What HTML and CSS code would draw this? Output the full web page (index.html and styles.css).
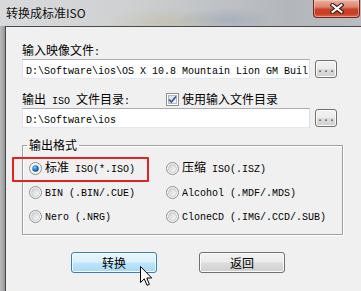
FILE: index.html
```html
<!DOCTYPE html>
<html>
<head>
<meta charset="utf-8">
<link rel="stylesheet" href="styles.css">
</head>
<body>
<div class="window">
  <div class="titlebar">
    <div class="title">转换成标准ISO</div>
    <div class="close">
      <svg width="14" height="11" viewBox="0 0 14 11"><path d="M2.5 2 L11.5 9 M11.5 2 L2.5 9" stroke="#3b1d17" stroke-width="4.2" stroke-linecap="square" fill="none"/><path d="M2.5 2 L11.5 9 M11.5 2 L2.5 9" stroke="#ffffff" stroke-width="2" stroke-linecap="square" fill="none"/></svg>
    </div>
  </div>
  <div class="body">
    <div class="frame-left"></div>
    <div class="content">
      <div class="label">输入映像文件<span class="m">:</span></div>
      <div class="field-row">
        <div class="input"><span class="m">D:\Software\ios\OS X 10.8 Mountain Lion GM Buil</span></div>
        <div class="btn small"><span class="m">...</span></div>
      </div>
      <div class="label-row">
        <div class="label w">输出<span class="m"> ISO </span>文件目录<span class="m">:</span></div>
        <div class="check">
          <svg class="box" width="13" height="13" viewBox="0 0 13 13"><defs><linearGradient id="cb" x1="0" y1="0" x2="1" y2="1"><stop offset="0" stop-color="#d9dcdf"/><stop offset="1" stop-color="#f9f9f9"/></linearGradient></defs><rect x="0.5" y="0.5" width="12" height="12" fill="#fff" stroke="#8f8f8f"/><rect x="2.5" y="2.5" width="8" height="8" fill="url(#cb)" stroke="#b4b7bb"/><path d="M3 6.5 L5.3 9 L10 3.5" stroke="#3451a0" stroke-width="1.8" fill="none"/></svg>
          <span>使用输入文件目录</span>
        </div>
      </div>
      <div class="field-row">
        <div class="input"><span class="m">D:\Software\ios</span></div>
        <div class="btn small"><span class="m">...</span></div>
      </div>
      <fieldset class="group">
        <legend>输出格式</legend>
        <div class="options">
          <div class="opt"><svg class="radio" width="13" height="13" viewBox="0 0 13 13"><defs><radialGradient id="rs" cx="0.4" cy="0.35" r="0.7"><stop offset="0" stop-color="#8fd6ff"/><stop offset="0.5" stop-color="#1e7fd2"/><stop offset="1" stop-color="#0b3f7c"/></radialGradient></defs><circle cx="6.5" cy="6.5" r="6" fill="#f4f4f4" stroke="#8e8f8f"/><circle cx="6.5" cy="6.5" r="3.2" fill="url(#rs)"/></svg><span class="lbl">标准<span class="m"> ISO(*.ISO)</span></span></div>
          <div class="opt"><svg class="radio" width="13" height="13" viewBox="0 0 13 13"><defs><linearGradient id="ru1" x1="0" y1="0" x2="1" y2="1"><stop offset="0" stop-color="#cfd1d3"/><stop offset="1" stop-color="#fbfbfb"/></linearGradient></defs><circle cx="6.5" cy="6.5" r="6" fill="#f6f6f6" stroke="#8e8f8f"/><circle cx="6.5" cy="6.5" r="4" fill="url(#ru1)" stroke="#c2c4c6" stroke-width="0.8"/></svg><span class="lbl">压缩<span class="m"> ISO(.ISZ)</span></span></div>
          <div class="opt"><svg class="radio" width="13" height="13" viewBox="0 0 13 13"><circle cx="6.5" cy="6.5" r="6" fill="#f6f6f6" stroke="#8e8f8f"/><circle cx="6.5" cy="6.5" r="4" fill="url(#ru1)" stroke="#c2c4c6" stroke-width="0.8"/></svg><span class="lbl"><span class="m">BIN (.BIN/.CUE)</span></span></div>
          <div class="opt"><svg class="radio" width="13" height="13" viewBox="0 0 13 13"><circle cx="6.5" cy="6.5" r="6" fill="#f6f6f6" stroke="#8e8f8f"/><circle cx="6.5" cy="6.5" r="4" fill="url(#ru1)" stroke="#c2c4c6" stroke-width="0.8"/></svg><span class="lbl"><span class="m">Alcohol (.MDF/.MDS)</span></span></div>
          <div class="opt"><svg class="radio" width="13" height="13" viewBox="0 0 13 13"><circle cx="6.5" cy="6.5" r="6" fill="#f6f6f6" stroke="#8e8f8f"/><circle cx="6.5" cy="6.5" r="4" fill="url(#ru1)" stroke="#c2c4c6" stroke-width="0.8"/></svg><span class="lbl"><span class="m">Nero (.NRG)</span></span></div>
          <div class="opt"><svg class="radio" width="13" height="13" viewBox="0 0 13 13"><circle cx="6.5" cy="6.5" r="6" fill="#f6f6f6" stroke="#8e8f8f"/><circle cx="6.5" cy="6.5" r="4" fill="url(#ru1)" stroke="#c2c4c6" stroke-width="0.8"/></svg><span class="lbl"><span class="m">CloneCD (.IMG/.CCD/.SUB)</span></span></div>
        </div>
      </fieldset>
      <div class="buttons">
        <div class="btn big hover">转换</div>
        <div class="btn big">返回</div>
      </div>
    </div>
  </div>
  <div class="highlight"></div>
  <svg class="cursor" width="13" height="21" viewBox="0 0 13 21"><path d="M0.5 0.5 L0.5 16.5 L4.3 12.8 L7 19.3 L9.4 18.3 L6.8 12 L11.7 12 Z" fill="#fff" stroke="#000" stroke-width="1" stroke-linejoin="miter"/></svg>
</div>
</body>
</html>
```

FILE: styles.css
```css
* { box-sizing: border-box; }
html, body { margin: 0; padding: 0; }
body {
  width: 361px;
  height: 291px;
  overflow: hidden;
  background: #f0f0f0;
  color: #000;
  font-family: "Noto Sans CJK SC", "Liberation Sans", sans-serif;
  font-size: 12px;
}
.m {
  font-family: "Liberation Mono", "DejaVu Sans Mono", monospace;
  font-size: 10px;
  white-space: pre;
}
.window {
  position: relative;
  width: 361px;
  height: 291px;
  display: flex;
  flex-direction: column;
}
.titlebar {
  height: 26px;
  flex: none;
  display: flex;
  align-items: flex-start;
  background:
    radial-gradient(ellipse 60px 14px at 165px 22px, rgba(190,180,140,0.35), rgba(190,180,140,0) 100%),
    radial-gradient(ellipse 50px 12px at 225px 20px, rgba(120,140,170,0.30), rgba(120,140,170,0) 100%),
    linear-gradient(90deg, #d9dadb 0%, #cfd0d1 35%, #bfc2c5 60%, #b3b7bc 80%, #b9bcc0 100%);
}
.title {
  padding-left: 6px;
  margin-top: 5px;
  line-height: 16px;
  font-size: 12px;
  color: #111;
}
.close {
  margin-left: auto;
  margin-right: 1px;
  width: 47px;
  height: 18px;
  border: 1px solid #6b2a1f;
  border-top: none;
  border-radius: 0 0 4px 4px;
  background: linear-gradient(#eab2a4 0%, #dc8670 40%, #c8432a 55%, #c93d22 80%, #d9694e 100%);
  box-shadow: inset 0 0 0 1px rgba(255,220,210,0.45);
  display: flex;
  align-items: center;
  justify-content: center;
}
.body {
  flex: 1;
  display: flex;
}
.frame-left {
  width: 6px;
  flex: none;
  background: linear-gradient(90deg, #b9babb 0%, #a9abad 50%, #8f9295 100%);
  border-right: 1px solid #4a4a4a;
}
.content {
  flex: 1;
  border-top: 1px solid #4a4a4a;
  padding: 16px 0 0 16px;
}
.label {
  height: 14px;
  line-height: 14px;
  white-space: nowrap;
}
.label.w { width: 144px; }
.field-row {
  display: flex;
  align-items: center;
  gap: 5px;
  height: 20px;
  margin-top: 2px;
}
.input {
  width: 288px;
  height: 20px;
  background: #fff;
  border: 1px solid;
  border-color: #abadb3 #dbdfe6 #e3e9ef #e2e3ea;
  padding: 0 3px;
  line-height: 18px;
  white-space: nowrap;
  overflow: hidden;
}
.btn {
  display: flex;
  align-items: center;
  justify-content: center;
  border: 1px solid #707070;
  border-radius: 3px;
  background: linear-gradient(#f2f2f2 0%, #ebebeb 48%, #dddddd 52%, #cfcfcf 100%);
  box-shadow: inset 0 0 0 1px #fbfbfb;
}
.btn.small {
  width: 22px;
  height: 18px;
  line-height: 10px;
  padding-top: 2px;
  color: #333;
}
.label-row {
  display: flex;
  align-items: center;
  height: 14px;
  margin-top: 13px;
}
.check {
  display: flex;
  align-items: center;
  gap: 3px;
  line-height: 14px;
}
.box { display: block; flex: none; }
.group {
  width: 321px;
  margin: 10px 0 0 0;
  padding: 4px 0 6px 0;
  border: 1px solid #a0a0a0;
  box-shadow: 1px 1px 0 #ffffff, inset 1px 1px 0 #ffffff;
  min-width: 0;
}
.group legend {
  margin-left: 4px;
  padding: 0 2px;
  line-height: 14px;
}
.options {
  display: grid;
  grid-template-columns: 137px 1fr;
  grid-auto-rows: 24px;
}
.opt {
  display: flex;
  align-items: center;
  gap: 3px;
  padding-left: 6px;
  white-space: nowrap;
}
.radio { display: block; flex: none; }
.lbl { line-height: 14px; }
.buttons {
  display: flex;
  gap: 42px;
  margin-top: 17px;
  padding-left: 49px;
}
.btn.big {
  width: 86px;
  height: 21px;
  line-height: 14px;
}
.btn.hover {
  border-color: #3c7fb1;
  background: linear-gradient(#eaf6fd 0%, #d9f0fc 48%, #bee6fd 52%, #a7d9f5 100%);
  box-shadow: inset 0 0 0 1px #f4fbff;
}
.highlight {
  position: absolute;
  left: 12px;
  top: 157px;
  width: 137px;
  height: 25px;
  border: 2px solid #e2231f;
  border-radius: 1px;
}
.cursor {
  position: absolute;
  left: 140px;
  top: 266px;
}
```
